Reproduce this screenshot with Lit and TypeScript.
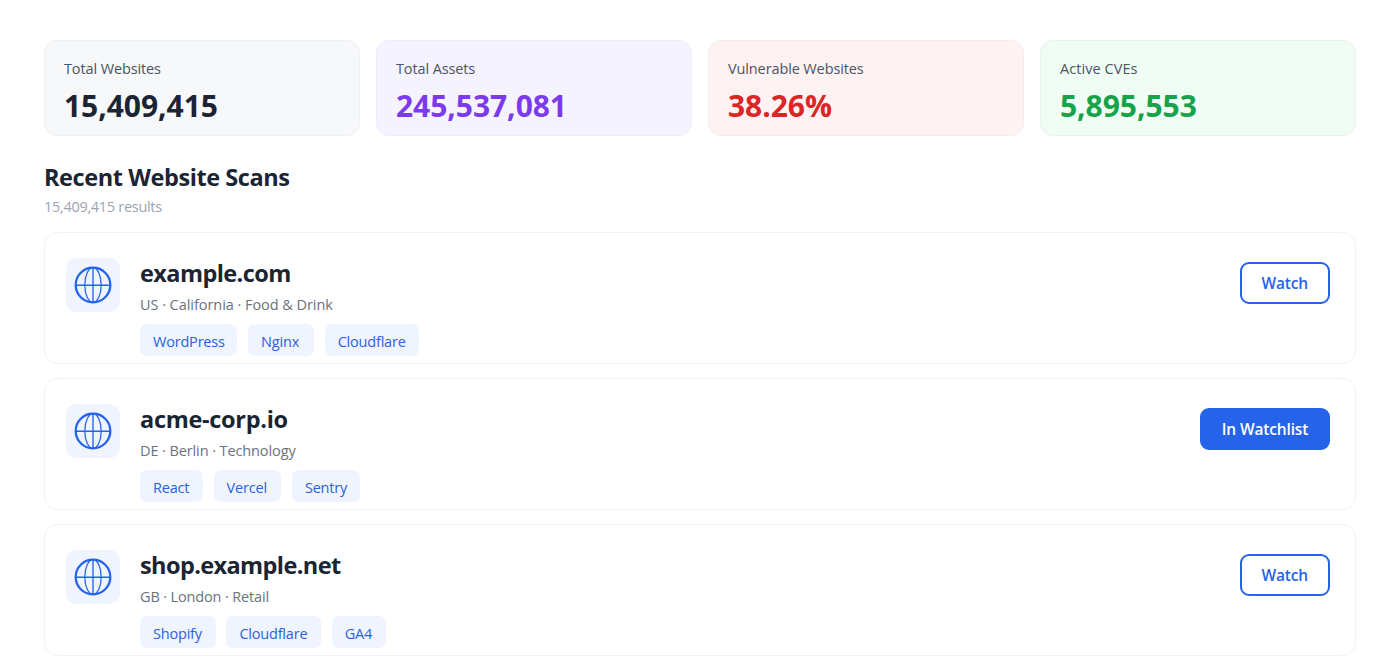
import { LitElement, html, css } from "lit";
import { customElement, property } from "lit/decorators.js";

interface Tag { label: string; width: number; }
interface Site { name: string; meta: string; tags: Tag[]; watched: boolean; kind: string; }

const STATS = [
  { label: "Total Websites", value: "15,409,415", tone: "slate" },
  { label: "Total Assets", value: "245,537,081", tone: "violet" },
  { label: "Vulnerable Websites", value: "38.26%", tone: "red" },
  { label: "Active CVEs", value: "5,895,553", tone: "green" },
];

const SITES: Site[] = [
  {
    name: "example.com", meta: "US · California · Food & Drink", watched: false, kind: "a",
    tags: [{ label: "WordPress", width: 97.3 }, { label: "Nginx", width: 65.8 }, { label: "Cloudflare", width: 94.5 }],
  },
  {
    name: "acme-corp.io", meta: "DE · Berlin · Technology", watched: true, kind: "b",
    tags: [{ label: "React", width: 62.8 }, { label: "Vercel", width: 67.5 }, { label: "Sentry", width: 68 }],
  },
  {
    name: "shop.example.net", meta: "GB · London · Retail", watched: false, kind: "c",
    tags: [{ label: "Shopify", width: 75.6 }, { label: "Cloudflare", width: 94.5 }, { label: "GA4", width: 54 }],
  },
];

@customElement("stat-card")
export class StatCard extends LitElement {
  @property() label = "";
  @property() value = "";
  @property() tone = "slate";

  static styles = css`
    :host { display: block; }
    .card { box-sizing: border-box; height: 96px; border: 1px solid #e9ecf1; border-radius: 13px; padding: 17px 19px; }
    .label { font-size: 14.5px; line-height: 22px; color: #4b5563; letter-spacing: -0.12px; white-space: nowrap; }
    .value { margin-top: 6px; font-size: 30px; line-height: 40px; font-weight: 700; letter-spacing: -0.05px; white-space: nowrap; }
    .slate { background: #f6f8fa; border-color: #eef0f3; }
    .violet { background: #f5f3ff; border-color: #eeedf7; }
    .red { background: #fef2f2; border-color: #f6ecee; }
    .green { background: #f0fdf4; border-color: #e8f3ee; }
    .green .label { letter-spacing: 0.06px; }
    .slate .value { color: #1a2433; }
    .violet .value { color: #7c3aed; }
    .red .value { color: #dc2626; }
    .green .value { color: #16a34a; }
  `;

  render() {
    return html`<div class="card ${this.tone}">
      <div class="label">${this.label}</div>
      <div class="value">${this.value}</div>
    </div>`;
  }
}

@customElement("site-card")
export class SiteCard extends LitElement {
  @property({ attribute: false }) site!: Site;

  static styles = css`
    :host { display: block; }
    .card { box-sizing: border-box; height: 132px; display: flex; align-items: flex-start; border: 1px solid #eff1f5; border-radius: 13px; padding: 25px 25px 0 21px; background: #fff; }
    .icon { width: 54px; height: 54px; flex: none; border-radius: 11px; background: #eff4ff; }
    .icon svg { display: block; }
    .body { flex: 1; margin-left: 20px; }
    .name { margin-top: -1px; font-size: 23.5px; line-height: 32px; font-weight: 700; color: #1a2433; white-space: nowrap; }
    .name.a { letter-spacing: -0.58px; }
    .name.b { letter-spacing: -0.3px; }
    .name.c { letter-spacing: -0.6px; }
    .meta { font-size: 14.5px; line-height: 22px; margin-top: 5px; color: #6b7280; letter-spacing: -0.05px; white-space: nowrap; }
    .meta.b { letter-spacing: -0.1px; }
    .meta.c { letter-spacing: -0.15px; }
    .tags { display: flex; gap: 10.8px; margin-top: 8px; }
    .tag { box-sizing: border-box; height: 32px; padding: 1px 0 0 13px; border-radius: 7px; background: #eff4ff; color: #2a62d9; font-size: 14.5px; line-height: 34px; letter-spacing: -0.2px; white-space: nowrap; }
    .btn { box-sizing: border-box; flex: none; width: 90.5px; height: 42px; margin-top: 4px; border: 2px solid #2563eb; border-radius: 9px; background: #fff; color: #2563eb; font: inherit; font-size: 15.5px; font-weight: 600; line-height: 39px; letter-spacing: -0.15px; padding: 0; text-align: center; }
    .btn.on { width: 130px; background: #2563eb; color: #fff; }
  `;

  render() {
    const s = this.site;
    return html`<div class="card">
      <div class="icon">
        <svg width="54" height="54" viewBox="0 0 54 54" fill="none" stroke="#2563eb">
          <circle cx="27" cy="27" r="17.3" stroke-width="2.3"></circle>
          <ellipse cx="27" cy="27" rx="8.2" ry="17.3" stroke-width="1.25"></ellipse>
          <path d="M27 9.6V44.4M9.6 27.2H44.4" stroke-width="1.35"></path>
        </svg>
      </div>
      <div class="body">
        <div class="name ${s.kind}">${s.name}</div>
        <div class="meta ${s.kind}">${s.meta}</div>
        <div class="tags">${s.tags.map((t) => html`<span class="tag" style="width:${t.width}px">${t.label}</span>`)}</div>
      </div>
      <button class="btn ${s.watched ? "on" : ""}">${s.watched ? "In Watchlist" : "Watch"}</button>
    </div>`;
  }
}

@customElement("app-root")
export class AppRoot extends LitElement {
  static styles = css`
    :host { display: block; box-sizing: border-box; height: 660px; overflow: hidden; padding: 40px 44px 0; background: #fff; font-family: "Open Sans", "Noto Sans", sans-serif; }
    .stats { display: grid; grid-template-columns: repeat(4, 1fr); gap: 16px; }
    .title { margin: 25px 0 0; font-size: 23.5px; line-height: 32px; font-weight: 700; letter-spacing: -0.42px; color: #1a2433; }
    .count { margin-top: 3px; font-size: 14.5px; line-height: 22px; letter-spacing: -0.3px; color: #9ca3af; }
    .list { display: grid; gap: 14px; margin-top: 14px; }
  `;

  render() {
    return html`
      <div class="stats">${STATS.map((s) => html`<stat-card .label=${s.label} .value=${s.value} .tone=${s.tone}></stat-card>`)}</div>
      <h2 class="title">Recent Website Scans</h2>
      <div class="count">15,409,415 results</div>
      <div class="list">${SITES.map((s) => html`<site-card .site=${s}></site-card>`)}</div>
    `;
  }
}
